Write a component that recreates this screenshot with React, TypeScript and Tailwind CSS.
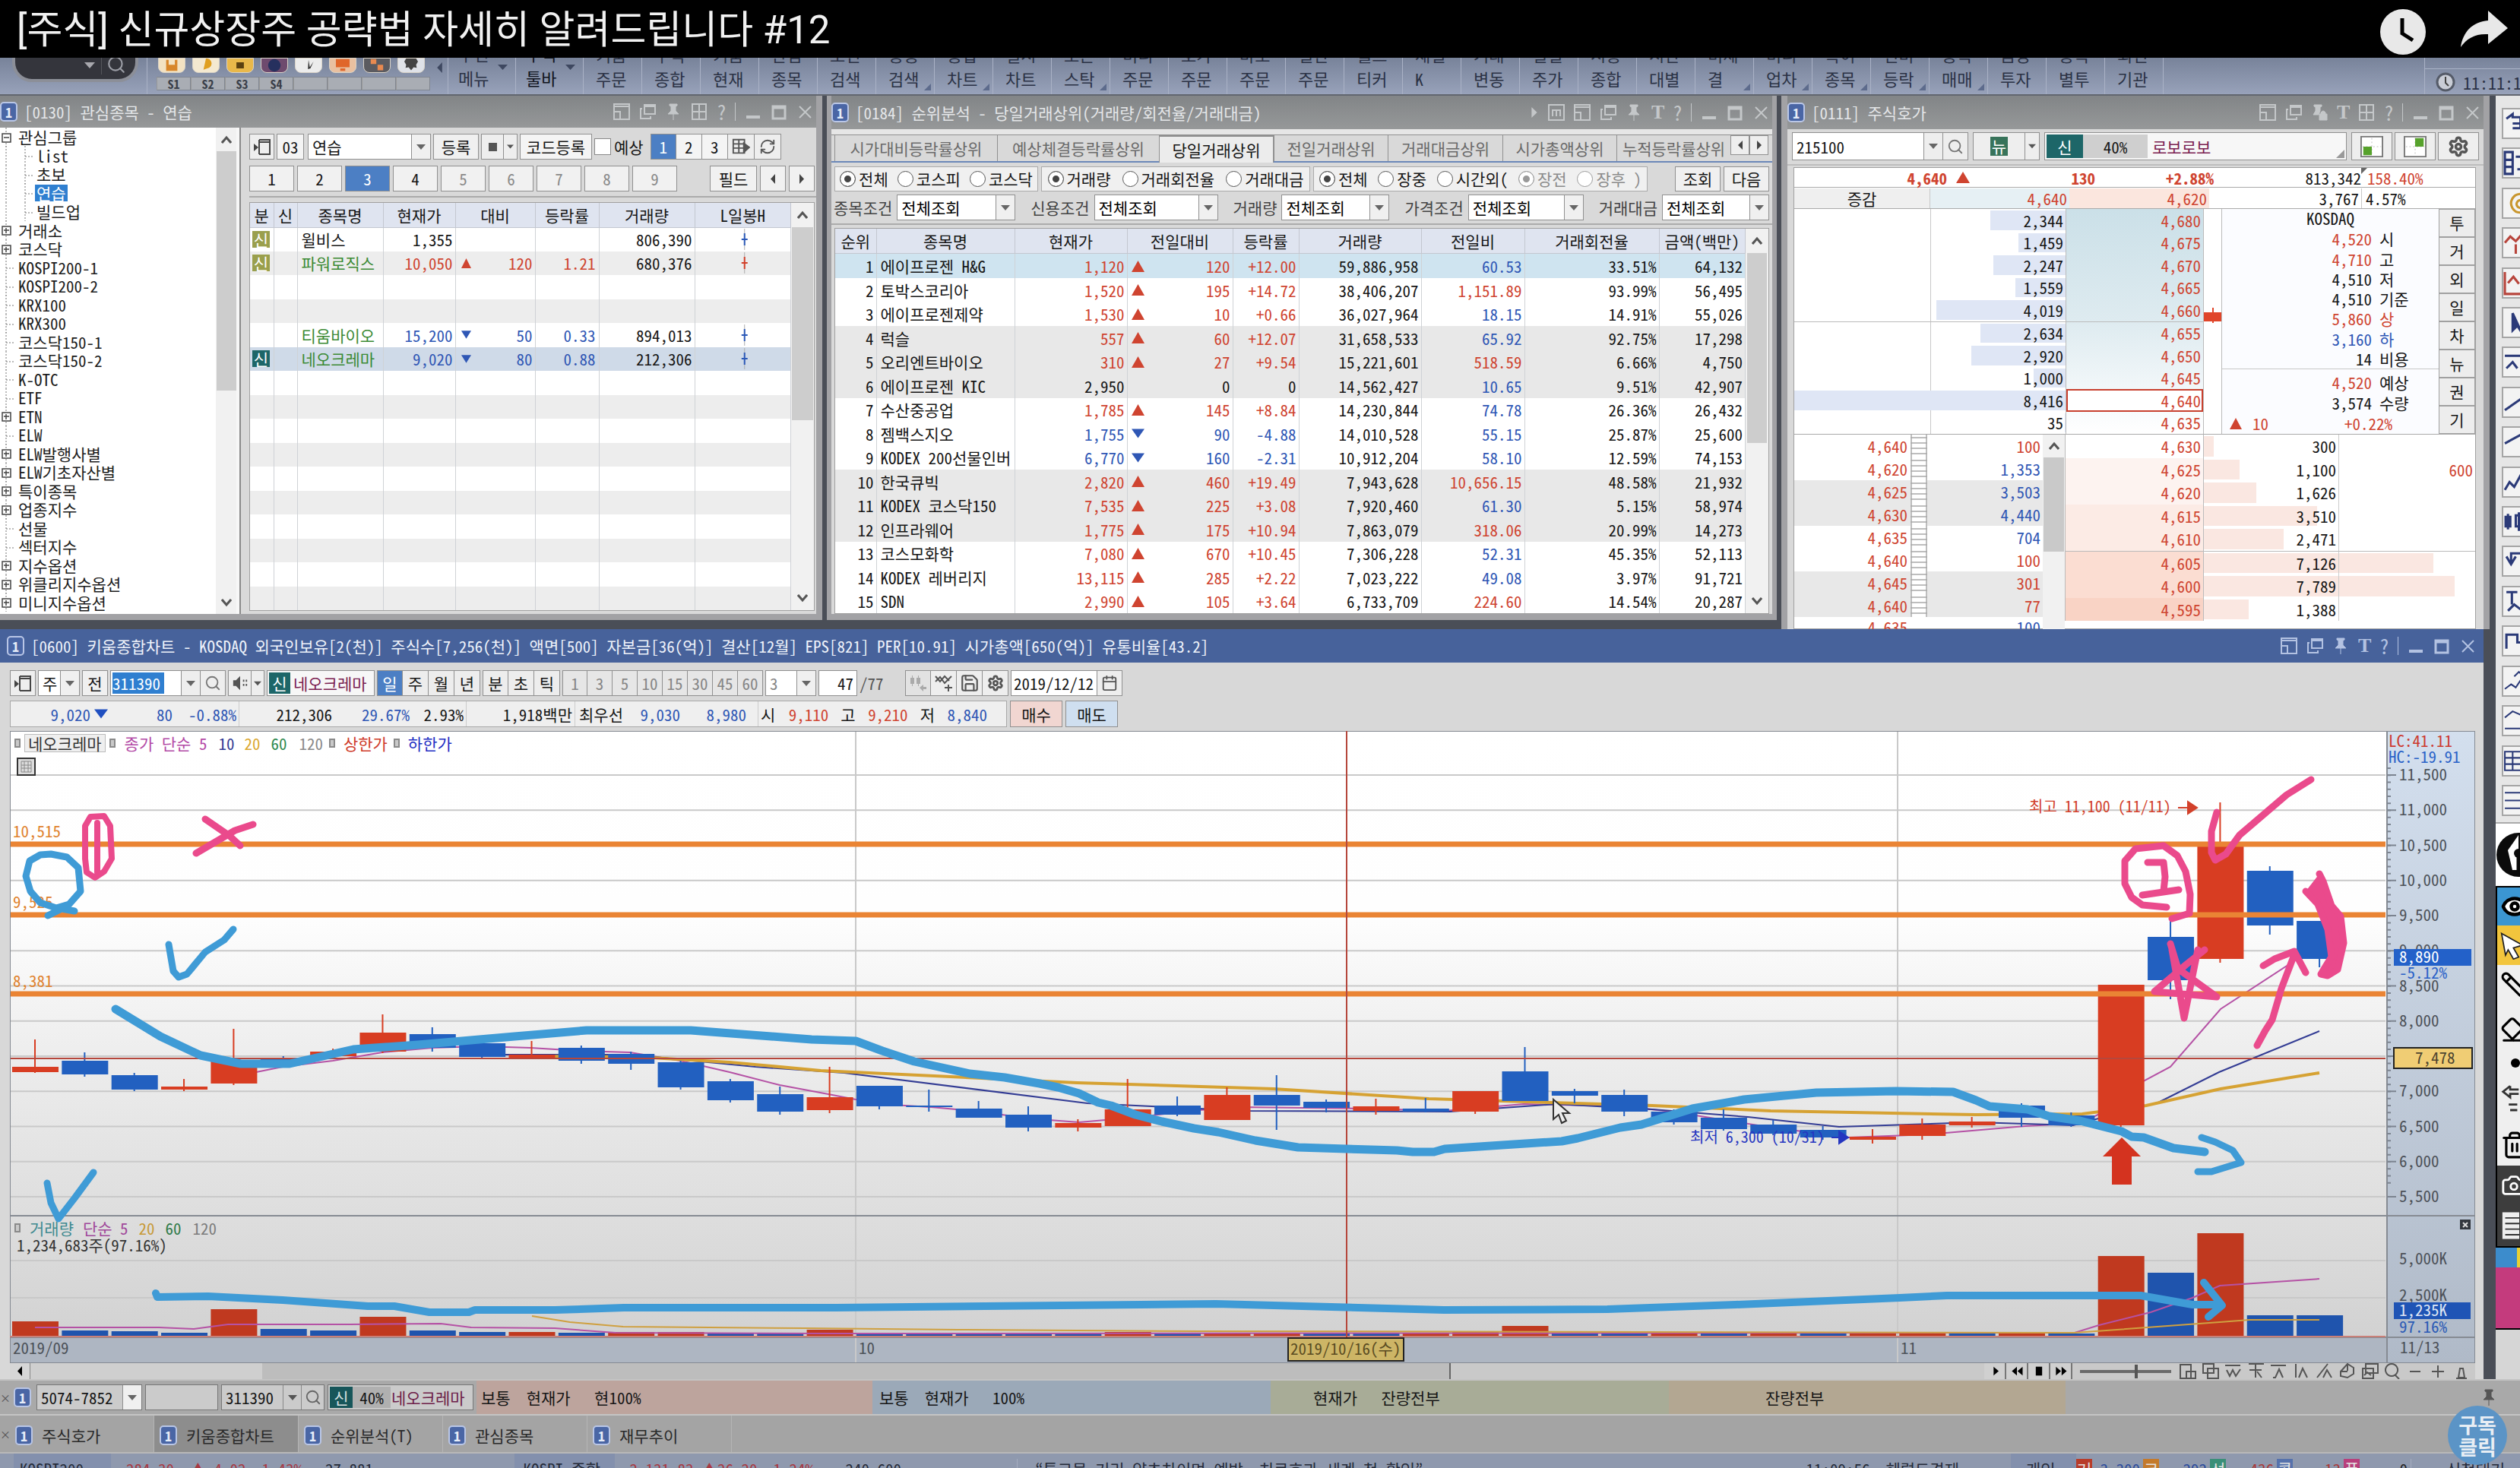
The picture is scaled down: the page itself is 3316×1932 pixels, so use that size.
import { ReactNode } from "react";
import { clsx } from "clsx";
import {
  Calendar,
  Camera,
  Eraser,
  Eye,
  Pencil,
  RefreshCw,
  Save,
  Search,
  Settings,
  Trash2,
} from "lucide-react";

type Tone = "up" | "down" | "none";

const toneText: Record<Tone, string> = {
  up: "text-[#cf4430]",
  down: "text-[#2f57b5]",
  none: "text-[#161616]",
};

/* ---------- small shared pieces ---------- */

const Arrow = ({ dir = "down", className }: { dir?: "down" | "up" | "left" | "right"; className?: string }) => {
  const points = {
    down: "0,1 10,1 5,9",
    up: "5,0 10,10 0,10",
    left: "8,0 8,10 2,5",
    right: "2,0 2,10 8,5",
  }[dir];
  return (
    <svg viewBox="0 0 10 10" className={clsx("shrink-0", className ?? "size-[12px] text-[#666]")} fill="currentColor" preserveAspectRatio="none">
      <polygon points={points} />
    </svg>
  );
};

const Chevron = ({ up }: { up?: boolean }) => (
  <svg viewBox="0 0 14 12" className="h-[14px] w-[14px] text-[#555]" fill="none" stroke="currentColor" strokeWidth="3">
    <path d={up ? "M1 10 L7 3 L13 10" : "M1 2 L7 9 L13 2"} />
  </svg>
);

const Badge = ({ className }: { className?: string }) => (
  <span
    className={clsx(
      "flex h-[26px] w-[23px] shrink-0 items-center justify-center rounded-[5px] border-2 border-[#b9c6e6] bg-[#4a66a5] text-[18px] font-bold leading-none text-[#e6ecf8]",
      className
    )}
  >
    1
  </span>
);

const Cell = ({ className, children, label }: { className?: string; children?: ReactNode; label?: string }) => (
  <button
    aria-label={label}
    className={clsx(
      "flex h-full shrink-0 items-center justify-center overflow-hidden whitespace-nowrap border border-[#909090]",
      className
    )}
  >
    {children}
  </button>
);

const Combo = ({ className, value, label, arrow = "w-[25px]" }: { className?: string; value: string; label: string; arrow?: string }) => (
  <span className={clsx("flex h-full shrink-0 border border-[#909090] bg-white", className)}>
    <select aria-label={label} className="min-w-0 flex-1 appearance-none bg-transparent pl-[5px] outline-none">
      <option>{value}</option>
    </select>
    <span className={clsx("flex shrink-0 items-center justify-center border-l border-[#909090] bg-[#f0f0f0]", arrow)}>
      <Arrow className="h-[9px] w-[12px] text-[#666]" />
    </span>
  </span>
);

const TitleIcon = ({ name }: { name: string }) => {
  if (name === "T") return <span className="w-[16px] text-center font-['Liberation_Serif',serif] text-[26px] font-bold leading-none">T</span>;
  if (name === "?") return <span className="w-[12px] text-center text-[26px] leading-none">?</span>;
  if (name === "|") return <span className="h-[24px] w-px bg-current" />;
  if (name === ">") return <Arrow dir="right" className="h-[14px] w-[12px]" />;
  return (
    <svg viewBox="0 0 22 22" className="size-[22px] shrink-0" fill="none" stroke="currentColor" strokeWidth="2">
      {name === "m" && <path d="M1 1h20v20H1z M6 16V8h10v8 M11 8v8" />}
      {name === "dock" && <path d="M1 1h20v20H1z M1 4h20 M1 11h8v10" />}
      {name === "copy" && <path d="M7 2h14v12H7z M4 7H2v13h13v-3 M7 4h14" />}
      {name === "pin" && <path d="M6 1h10v2l-2 1v6l4 4H4l4-4V4L6 3z M11 14v8" fill="currentColor" strokeWidth="1" />}
      {name === "lock" && <path d="M4 1h10v2l-2 1v5l-2 5H3l3-5V4L4 3z M11 13h10v8H11z M13 13v-2q3-4 6 0v2" fill="currentColor" strokeWidth="1" />}
      {name === "grid" && <path d="M2 1h18v20H2z M11 1v20 M2 11h18" />}
      {name === "min" && <path d="M2 18h18" strokeWidth="4" />}
      {name === "max" && <path d="M3 4h16v16H3z M3 6h16" strokeWidth="3" />}
      {name === "close" && <path d="M4 4l15 15 M19 4L4 19" />}
    </svg>
  );
};

const TitleBar = ({ title, icons, className, tone }: { title: string; icons: string[]; className?: string; tone?: string }) => (
  <header className={clsx("flex shrink-0 items-center", className)}>
    <Badge />
    <h2 className="ml-[9px] whitespace-pre">{title}</h2>
    <div className={clsx("ml-auto flex items-center gap-3", tone)}>
      {icons.map((name) => (
        <TitleIcon key={name} name={name} />
      ))}
    </div>
  </header>
);

/* ---------- top of the screen ---------- */

const VideoBar = () => (
  <header className="z-10 flex h-[76px] shrink-0 items-center bg-black pl-[22px] pr-[14px] text-[#f1f1f1]">
    <h1 className="mt-[3px] font-[Roboto,'Noto_Sans_CJK_KR',sans-serif] text-[51px] leading-none">
      [주식] 신규상장주 공략법 자세히 알려드립니다 #12
    </h1>
    <button aria-label="나중에 볼 동영상" className="ml-auto mt-[8px]">
      <svg viewBox="0 0 62 62" className="size-[62px]">
        <circle cx="31" cy="31" r="30" fill="#e8e8e8" />
        <path d="M30 13v20l14 9" fill="none" stroke="#000" strokeWidth="5" />
      </svg>
    </button>
    <button aria-label="공유" className="ml-[43px]">
      <svg viewBox="0 0 66 52" className="h-[52px] w-[66px]" fill="#e8e8e8">
        <path d="M38 2 L64 25 L38 46 V33 C22 32 10 38 2 50 C5 30 17 17 38 15 Z" />
      </svg>
    </button>
  </header>
);

const menuItems: [string, string, boolean?][] = [
  ["키움", "주문"], ["주식", "종합"], ["키움", "현재"], ["관심", "종목"], ["조건", "검색"],
  ["종종", "검색", true], ["종합", "차트", true], ["실시", "차트"], ["오픈", "스탁", true],
  ["미니", "주문"], ["호가", "주문"], ["바로", "주문"], ["일반", "주문"], ["월드", "티커"],
  ["채널", "K"], ["거래", "변동"], ["일별", "주가"], ["시총", "종합"], ["시간", "대별"],
  ["미체", "결", true], ["미니", "업차", true], ["특이", "종목", true], ["전비", "등락", true],
  ["종목", "매매", true], ["금융", "투자"], ["종목", "별투"], ["외인", "기관"],
];

const quickIcons = [
  { bg: "bg-[#f3e2c2]", fg: "#d8862a", d: "M8 2h18v18H8z M12 2v8h10V2" },
  { bg: "bg-[#f4e9d0]", fg: "#e0a020", d: "M17 0a8 8 0 0 1 2 16l-6 2z" },
  { bg: "bg-[#e9b84a]", fg: "#5b4010", d: "M11 6h12v10H11z M17 16v4" },
  { bg: "bg-[#6e4a6e]", fg: "#26305e", d: "M17 1a10 10 0 1 0 .1 0z" },
  { bg: "bg-[#ececec]", fg: "#333", d: "M17 2l2 12 6-9-5 11-4 1z" },
  { bg: "bg-[#e9c0a0]", fg: "#e0662a", d: "M6 1h22v13H6z M13 16h8v4h-8z" },
  { bg: "bg-[#5b5b60]", fg: "#e98a50", d: "M18 10h9v9h-9z M7 1h9v8H7z" },
  { bg: "bg-[#dfe2e8]", fg: "#444", d: "M9 0h16l3 5-3 5 1 5-5-1-4 5-4-5-5 1 1-5-3-5z" },
];

const MainToolbar = () => (
  <nav className="flex h-[50px] shrink-0 items-end overflow-hidden border-b-2 border-[#62666f] bg-linear-to-b from-[#78839a] to-[#98a2ba] text-[22px] leading-[32px] text-[#2b3245]">
    <div className="ml-[16px] flex h-[80px] shrink-0 items-end pb-[16px]">
      <div className="flex h-[60px] w-[166px] items-end justify-end rounded-[26px] border-4 border-[#8c8f98] bg-[#34353c] pb-[6px] text-[#9a9ca4]">
        <Arrow className="mb-[7px] mr-[8px] h-[10px] w-[14px] text-[#a8a8ae]" />
        <span className="mr-[6px] h-[40px] w-px bg-[#55565c]" />
        <Search className="mr-[12px] size-[26px]" />
      </div>
    </div>
    <div className="ml-[11px] flex h-full w-[396px] shrink-0 flex-col justify-between border-l border-[#aab2c6] pb-[5px] pl-[12px]">
      <div className="flex gap-[9px] pl-[2px]">
        {quickIcons.map((icon, i) => (
          <button key={i} aria-label={`빠른 도구 ${i + 1}`} className={clsx("h-[20px] w-[36px] rounded-b-[8px] border border-[#d9d3c8]", icon.bg)}>
            <svg viewBox="0 0 34 22" className="h-[18px] w-[34px]" fill={icon.fg}>
              <path d={icon.d} />
            </svg>
          </button>
        ))}
        <Arrow dir="left" className="mt-[6px] ml-[5px] h-[14px] w-[11px] text-[#3e4860]" />
      </div>
      <div className="flex text-[16px] font-bold leading-[16px] text-[#3a3f49]">
        {["S1", "S2", "S3", "S4", "", "", "", ""].map((s, i) => (
          <span key={i} className="h-[18px] w-[45px] border border-l-[#989898] border-[#808690] bg-[#a9adb4] text-center">
            {s}
          </span>
        ))}
      </div>
    </div>
    {[["추천", "메뉴"], ["주식", "툴바"]].map(([top, bottom], i) => (
      <div key={bottom} className={clsx("flex h-[70px] w-[89px] shrink-0 border-l border-[#aab2c6] pl-[13px]", i === 1 && "text-[#0f131d]")}>
        <p className="w-[44px]">
          {top}
          <br />
          {bottom}
        </p>
        <Arrow className="mt-[30px] ml-[8px] h-[9px] w-[13px] text-[#3e4860]" />
      </div>
    ))}
    {menuItems.map(([top, bottom, more], i) => (
      <button key={i} className="relative h-[74px] w-[77px] shrink-0 border-l border-[#aab2c6] pl-[16px] text-left">
        {top}
        <br />
        {bottom}
        {more && (
          <svg viewBox="0 0 10 10" className="absolute right-[4px] bottom-[5px] size-[9px]" fill="#5d6b8c">
            <path d="M10 0v10H0z" />
          </svg>
        )}
      </button>
    ))}
    <div className="h-[66px] flex-1 border-l border-[#aab2c6]" />
    <div className="flex h-[66px] w-[126px] shrink-0 items-end border-l border-[#aab2c6]">
      <div className="flex h-[34px] w-full items-center gap-[10px] border-t border-[#aab2c6] pl-[14px]">
        <svg viewBox="0 0 26 26" className="size-[26px] shrink-0">
          <circle cx="13" cy="13" r="11" fill="#c9cdd6" stroke="#555b68" strokeWidth="3" />
          <path d="M13 6v8l4 4" fill="none" stroke="#444" strokeWidth="2" />
        </svg>
        <time className="whitespace-nowrap">11:11:15</time>
      </div>
    </div>
  </nav>
);

/* ---------- [0130] watch list ---------- */

const treeRows: { name: string; kind: "open" | "plus" | "leaf" | "child" }[] = [
  { name: "관심그룹", kind: "open" },
  { name: "list", kind: "child" },
  { name: "초보", kind: "child" },
  { name: "연습", kind: "child" },
  { name: "빌드업", kind: "child" },
  { name: "거래소", kind: "plus" },
  { name: "코스닥", kind: "plus" },
  { name: "KOSPI200-1", kind: "leaf" },
  { name: "KOSPI200-2", kind: "leaf" },
  { name: "KRX100", kind: "leaf" },
  { name: "KRX300", kind: "leaf" },
  { name: "코스닥150-1", kind: "leaf" },
  { name: "코스닥150-2", kind: "leaf" },
  { name: "K-OTC", kind: "leaf" },
  { name: "ETF", kind: "leaf" },
  { name: "ETN", kind: "plus" },
  { name: "ELW", kind: "leaf" },
  { name: "ELW발행사별", kind: "plus" },
  { name: "ELW기초자산별", kind: "plus" },
  { name: "특이종목", kind: "plus" },
  { name: "업종지수", kind: "plus" },
  { name: "선물", kind: "leaf" },
  { name: "섹터지수", kind: "leaf" },
  { name: "지수옵션", kind: "plus" },
  { name: "위클리지수옵션", kind: "plus" },
  { name: "미니지수옵션", kind: "plus" },
];

const watchRows: (null | { tag?: string; name: string; price: string; diff?: string; rate?: string; vol: string; tone: Tone; green?: boolean })[] = [
  { tag: "bg-[#9a9f4c]", name: "윌비스", price: "1,355", vol: "806,390", tone: "none" },
  { tag: "bg-[#9a9f4c]", name: "파워로직스", price: "10,050", diff: "120", rate: "1.21", vol: "680,376", tone: "up", green: true },
  null,
  null,
  { name: "티움바이오", price: "15,200", diff: "50", rate: "0.33", vol: "894,013", tone: "down", green: true },
  { tag: "bg-[#1d6668]", name: "네오크레마", price: "9,020", diff: "80", rate: "0.88", vol: "212,306", tone: "down", green: true },
  ...Array(10).fill(null),
];

const WatchWindow = () => (
  <section className="flex h-[690px] flex-col border-r-8 border-b-8 border-[#a2a2a5] bg-[#d9d9d9]">
    <TitleBar
      className="h-[42px] bg-linear-to-b from-[#828587] to-[#969899] pr-[4px] text-[#e4e6e8]"
      tone="text-[#c4c7c9]"
      title="[0130] 관심종목 - 연습"
      icons={["dock", "copy", "pin", "grid", "?", "|", "min", "max", "close"]}
    />
    <div className="flex min-h-0 flex-1">
      <div className="flex w-[317px] shrink-0 overflow-hidden border-r-2 border-[#8a8a8a] bg-white text-[#1c1c1c]">
        <ul className="flex h-[637px] flex-1 flex-col">
          {treeRows.map(({ name, kind }) => (
            <li key={name} className="flex min-h-0 flex-1 items-center whitespace-nowrap leading-[22px]">
              <svg viewBox="0 0 24 25" className="h-[25px] w-[24px] shrink-0" stroke="#777" fill="none">
                <path d="M8 0v25" strokeDasharray="2 2" />
                {(kind === "plus" || kind === "open") && <path d="M3 8h11v11H3z M5 13h7" fill="#fff" stroke="#444" strokeWidth="1.5" />}
                {kind === "plus" && <path d="M8 10v7" stroke="#444" strokeWidth="1.5" />}
                {kind === "leaf" && <path d="M8 14h12" strokeDasharray="2 2" />}
              </svg>
              {kind === "child" && (
                <svg viewBox="0 0 22 25" className="h-[25px] w-[22px] shrink-0" stroke="#777" fill="none">
                  <path d="M9 0v25 M9 14h12" strokeDasharray="2 2" />
                </svg>
              )}
              <span className={clsx(kind === "child" && "px-[2px]", name === "연습" && "bg-[#2f7fd0] text-white")}>{name}</span>
            </li>
          ))}
        </ul>
        <div className="flex w-[27px] shrink-0 flex-col items-center bg-[#f1f1f1]">
          <span className="flex h-[31px] items-center"><Chevron up /></span>
          <span className="h-[315px] w-[26px] bg-[#cdcdcd]" />
          <span className="mt-auto flex h-[30px] items-center"><Chevron /></span>
        </div>
        <span className="w-[4px] bg-[#f7f7f7]" />
      </div>
      <div className="flex min-w-0 flex-1 flex-col pl-[11px]">
        <div className="mt-[8px] flex h-[34px] items-center gap-[3px]">
          <Cell label="패널 접기" className="w-[33px] bg-[#eee]">
            <svg viewBox="0 0 24 24" className="size-[24px]" fill="none" stroke="#444" strokeWidth="2">
              <path d="M8 3h14v19H8 M8 3v19 M8 6h14" />
              <path d="M1 8l6 5-6 5z" fill="#444" stroke="none" />
            </svg>
          </Cell>
          <span className="flex h-full w-[36px] items-center justify-center border border-[#909090] bg-[#f4f4f4]">03</span>
          <Combo label="관심그룹" value="연습" className="ml-[2px] w-[162px]" />
          <Cell className="w-[60px] bg-[#f0f0f0]">등록</Cell>
          <span className="flex h-full">
            <Cell label="색" className="w-[30px] bg-[#eee]"><span className="size-[11px] bg-[#555]" /></Cell>
            <Cell label="색 선택" className="w-[18px] border-l-0 bg-[#eee]"><Arrow className="h-[6px] w-[9px] text-[#555]" /></Cell>
          </span>
          <Cell className="w-[95px] bg-[#f4f4f4]">코드등록</Cell>
          <label className="flex items-center gap-[4px]">
            <input type="checkbox" className="size-[22px] appearance-none border border-[#888] bg-white" />
            예상
          </label>
          <span className="ml-[6px] flex h-full">
            {["1", "2", "3"].map((n) => (
              <Cell key={n} className={clsx("w-[34px]", n === "1" ? "bg-[#4c7fc4] text-white" : "border-l-0 bg-[#f4f4f4]")}>{n}</Cell>
            ))}
            <Cell label="표" className="w-[35px] border-l-0 bg-[#eee]">
              <svg viewBox="0 0 26 26" className="size-[24px]" fill="none" stroke="#555" strokeWidth="2">
                <path d="M2 3h16v19H2z M2 9h16 M2 15h16 M10 3v19" />
                <path d="M17 8l8 6-8 7z" fill="#555" />
              </svg>
            </Cell>
            <Cell label="새로고침" className="w-[35px] border-l-0 bg-[#eee]"><RefreshCw className="size-[22px] text-[#555]" /></Cell>
          </span>
        </div>
        <div className="mt-[8px] flex h-[34px] gap-[4px]">
          {[1, 2, 3, 4, 5, 6, 7, 8, 9].map((n) => (
            <Cell key={n} className={clsx("w-[59px]", n === 3 ? "bg-[#4c7fc4] text-white" : "bg-[#f1f1f1]", n > 4 && "text-[#8a8a8a]")}>{n}</Cell>
          ))}
          <Cell className="ml-auto w-[62px] bg-[#f1f1f1]">필드</Cell>
          <Cell label="이전" className="w-[34px] bg-[#f1f1f1]"><Arrow dir="left" className="h-[13px] w-[10px] text-[#444]" /></Cell>
          <Cell label="다음" className="mr-[2px] w-[34px] bg-[#f1f1f1]"><Arrow dir="right" className="h-[13px] w-[10px] text-[#444]" /></Cell>
        </div>
        <div className="mt-[6px] mb-[6px] h-[2px] bg-[#ababab]" />
        <div className="mr-[2px] flex h-[538px] border border-[#a0a0a0] bg-white">
          <table className="h-[536px] flex-1 table-fixed border-collapse">
            <colgroup>
              <col className="w-[31px]" /><col className="w-[31px]" /><col className="w-[113px]" /><col className="w-[95px]" />
              <col className="w-[105px]" /><col className="w-[84px]" /><col className="w-[126px]" /><col />
            </colgroup>
            <thead>
              <tr className="h-[32px] bg-[#dfe4f0]">
                {["분", "신", "종목명", "현재가", "대비", "등락률", "거래량", "L일봉H"].map((h) => (
                  <th key={h} className="border-r border-b border-[#c3c7d0] font-normal">{h}</th>
                ))}
              </tr>
            </thead>
            <tbody>
              {watchRows.map((row, i) => (
                <tr
                  key={i}
                  className={clsx(
                    "h-[31px] leading-[22px] *:border-r *:border-[#cfd2d6] *:p-0 *:whitespace-nowrap",
                    i === 5 ? "bg-[#cfdae8]" : i % 2 ? "bg-[#ededed]" : "bg-white"
                  )}
                >
                  <td>{row?.tag && <span className={clsx("ml-[3px] block w-[23px] text-center text-white", row.tag)}>신</span>}</td>
                  <td />
                  <td className={clsx(row?.green && "text-[#3c8a35]")}><span className="pl-[5px]">{row?.name}</span></td>
                  <td className={clsx("text-right", row && toneText[row.tone])}><span className="pr-[3px]">{row?.price}</span></td>
                  <td className={clsx(row && toneText[row.tone])}>
                    {row?.diff && (
                      <span className="flex items-center justify-between pl-[7px] pr-[3px]">
                        <Arrow dir={row.tone === "up" ? "up" : "down"} className="h-[13px] w-[13px]" />
                        {row.diff}
                      </span>
                    )}
                  </td>
                  <td className={clsx("text-right", row && toneText[row.tone])}><span className="pr-[4px]">{row?.rate}</span></td>
                  <td className="text-right"><span className="pr-[3px]">{row?.vol}</span></td>
                  <td>
                    {row && (
                      <svg viewBox="0 0 126 28" className="block h-[28px] w-full" strokeWidth="2" stroke={row.tone === "up" ? "#d2402a" : "#2b59b8"}>
                        <path d="M65 0v28" stroke="#aaa" strokeWidth="1" />
                        <path d="M65 6v16 M61 14h8" />
                      </svg>
                    )}
                  </td>
                </tr>
              ))}
            </tbody>
          </table>
          <div className="flex w-[30px] shrink-0 flex-col items-center bg-[#f1f1f1]">
            <span className="flex h-[32px] items-center"><Chevron up /></span>
            <span className="h-[254px] w-[28px] bg-[#cdcdcd]" />
            <span className="mt-auto flex h-[32px] items-center"><Chevron /></span>
          </div>
        </div>
      </div>
    </div>
  </section>
);

/* ---------- [0184] ranking ---------- */

type Rank = [string, string, Tone, string, string, string, string, Tone, string, string];

const rankRows: Rank[] = [
  ["에이프로젠 H&G", "1,120", "up", "120", "+12.00", "59,886,958", "60.53", "down", "33.51%", "64,132"],
  ["토박스코리아", "1,520", "up", "195", "+14.72", "38,406,207", "1,151.89", "up", "93.99%", "56,495"],
  ["에이프로젠제약", "1,530", "up", "10", "+0.66", "36,027,964", "18.15", "down", "14.91%", "55,026"],
  ["럭슬", "557", "up", "60", "+12.07", "31,658,533", "65.92", "down", "92.75%", "17,298"],
  ["오리엔트바이오", "310", "up", "27", "+9.54", "15,221,601", "518.59", "up", "6.66%", "4,750"],
  ["에이프로젠 KIC", "2,950", "none", "0", "0", "14,562,427", "10.65", "down", "9.51%", "42,907"],
  ["수산중공업", "1,785", "up", "145", "+8.84", "14,230,844", "74.78", "down", "26.36%", "26,432"],
  ["젬백스지오", "1,755", "down", "90", "-4.88", "14,010,528", "55.15", "down", "25.87%", "25,600"],
  ["KODEX 200선물인버", "6,770", "down", "160", "-2.31", "10,912,204", "58.10", "down", "12.59%", "74,153"],
  ["한국큐빅", "2,820", "up", "460", "+19.49", "7,943,628", "10,656.15", "up", "48.58%", "21,932"],
  ["KODEX 코스닥150", "7,535", "up", "225", "+3.08", "7,920,460", "61.30", "down", "5.15%", "58,974"],
  ["인프라웨어", "1,775", "up", "175", "+10.94", "7,863,079", "318.06", "up", "20.99%", "14,273"],
  ["코스모화학", "7,080", "up", "670", "+10.45", "7,306,228", "52.31", "down", "45.35%", "52,113"],
  ["KODEX 레버리지", "13,115", "up", "285", "+2.22", "7,023,222", "49.08", "down", "3.97%", "91,721"],
  ["SDN", "2,990", "up", "105", "+3.64", "6,733,709", "224.60", "up", "14.54%", "20,287"],
];

const Radio = ({ name, label, checked, muted }: { name: string; label: string; checked?: boolean; muted?: boolean }) => (
  <label className={clsx("flex items-center gap-[4px] whitespace-nowrap", muted && "text-[#8b8b8b]")}>
    <input
      type="radio"
      name={name}
      defaultChecked={checked}
      className={clsx(
        "size-[21px] appearance-none rounded-full border bg-white checked:shadow-[inset_0_0_0_5px_#fff]",
        muted ? "border-[#9a9a9a] checked:bg-[#999]" : "border-[#555] checked:bg-[#444]"
      )}
    />
    {label}
  </label>
);

const rankTabs: [string, string][] = [
  ["시가대비등락률상위", "w-[214px]"],
  ["예상체결등락률상위", "w-[213px]"],
  ["당일거래상위", "w-[151px]"],
  ["전일거래상위", "w-[150px]"],
  ["거래대금상위", "w-[151px]"],
  ["시가총액상위", "w-[150px]"],
  ["누적등락률상위", "w-[150px]"],
];

const filters: [string, string][] = [
  ["종목조건", "w-[156px]"],
  ["신용조건", "w-[163px]"],
  ["거래량", "w-[142px]"],
  ["가격조건", "w-[152px]"],
  ["거래대금", "w-[141px]"],
];

const RankWindow = () => (
  <section className="flex h-[690px] flex-col border-x-6 border-b-8 border-[#a2a2a5] bg-[#d9d9d9]">
    <TitleBar
      className="h-[44px] bg-linear-to-b from-[#828587] to-[#969899] pr-[4px] text-[#e4e6e8]"
      tone="text-[#c4c7c9]"
      title="[0184] 순위분석 - 당일거래상위(거래량/회전율/거래대금)"
      icons={[">", "m", "dock", "copy", "pin", "T", "?", "|", "min", "max", "close"]}
    />
    <div className="h-[8px] border-b border-[#909090] bg-[#e6e6e6]" />
    <div className="flex h-[36px] border-b-2 border-[#6c88b8] pl-[4px]">
      {rankTabs.map(([name, width]) => (
        <button
          key={name}
          className={clsx(
            "shrink-0 overflow-hidden whitespace-nowrap border-l border-[#909090]",
            width,
            name === "당일거래상위" ? "-mb-[2px] border-x border-t-2 border-[#6c88b8] bg-[#ececec]" : "text-[#6a6a6a]"
          )}
        >
          {name}
        </button>
      ))}
      <span className="flex h-[26px]">
        <Cell label="이전 탭" className="w-[25px] bg-[#eee]"><Arrow dir="left" className="h-[12px] w-[10px] text-[#444]" /></Cell>
        <Cell label="다음 탭" className="w-[25px] bg-[#eee]"><Arrow dir="right" className="h-[12px] w-[10px] text-[#444]" /></Cell>
      </span>
    </div>
    <div className="mt-[5px] flex h-[34px] gap-[4px] pl-[4px] pr-[4px]">
      <fieldset className="flex w-[268px] items-center justify-around border border-[#aaa] bg-[#f0f0f0]">
        <Radio name="market" label="전체" checked />
        <Radio name="market" label="코스피" />
        <Radio name="market" label="코스닥" />
      </fieldset>
      <fieldset className="flex w-[354px] items-center justify-around border border-[#aaa] bg-[#f0f0f0]">
        <Radio name="sort" label="거래량" checked />
        <Radio name="sort" label="거래회전율" />
        <Radio name="sort" label="거래대금" />
      </fieldset>
      <fieldset className="flex w-[440px] items-center justify-around border border-[#aaa] bg-[#f0f0f0]">
        <Radio name="time" label="전체" checked />
        <Radio name="time" label="장중" />
        <Radio name="time" label="시간외(" />
        <Radio name="after" label="장전" checked muted />
        <Radio name="after" label="장후 )" muted />
      </fieldset>
      <Cell className="ml-auto w-[60px] bg-[#f0f0f0]">조회</Cell>
      <Cell className="w-[60px] bg-[#f0f0f0]">다음</Cell>
    </div>
    <div className="mt-[4px] flex h-[34px] items-center justify-between pl-[3px] pr-[4px] text-[#444]">
      {filters.map(([label, width]) => (
        <div key={label} className="flex h-full items-center gap-[6px]">
          <span>{label}</span>
          <Combo label={label} value="전체조회" className={clsx("text-black", width)} />
        </div>
      ))}
    </div>
    <div className="mt-[4px] mb-[4px] h-[2px] bg-[#ababab]" />
    <div className="mx-[4px] flex h-[508px] border border-[#a0a0a0] bg-white">
      <table className="h-[506px] flex-1 table-fixed border-collapse">
        <colgroup>
          <col className="w-[54px]" /><col className="w-[182px]" /><col className="w-[148px]" /><col className="w-[139px]" /><col className="w-[87px]" />
          <col className="w-[161px]" /><col className="w-[136px]" /><col className="w-[177px]" /><col />
        </colgroup>
        <thead>
          <tr className="h-[33px] bg-[#dfe4f0]">
            {["순위", "종목명", "현재가", "전일대비", "등락률", "거래량", "전일비", "거래회전율", "금액(백만)"].map((h) => (
              <th key={h} className="border-r border-b border-[#c3c7d0] font-normal whitespace-nowrap">{h}</th>
            ))}
          </tr>
        </thead>
        <tbody>
          {rankRows.map(([name, price, tone, diff, rate, vol, ratio, ratioTone, turn, amount], i) => (
            <tr
              key={name}
              className={clsx(
                "leading-[22px] *:overflow-hidden *:border-r *:border-[#cfd2d6] *:py-0 *:pr-[3px] *:pl-0 *:text-right *:whitespace-nowrap",
                i === 0 ? "bg-[#cfe4f0]" : Math.floor(i / 3) % 2 ? "bg-[#e8e8e8]" : "bg-white"
              )}
            >
              <td>{i + 1}</td>
              <td><span className="block pl-[5px] text-left">{name}</span></td>
              <td className={toneText[tone]}>{price}</td>
              <td className={toneText[tone]}>
                <span className="flex items-center pl-[5px]">
                  {tone !== "none" && <Arrow dir={tone === "up" ? "up" : "down"} className="h-[15px] w-[17px]" />}
                  <span className="ml-auto">{diff}</span>
                </span>
              </td>
              <td className={toneText[tone]}>{rate}</td>
              <td>{vol}</td>
              <td className={toneText[ratioTone]}>{ratio}</td>
              <td>{turn}</td>
              <td>{amount}</td>
            </tr>
          ))}
        </tbody>
      </table>
      <div className="flex w-[30px] shrink-0 flex-col items-center bg-[#f1f1f1]">
        <span className="flex h-[32px] items-center"><Chevron up /></span>
        <span className="h-[250px] w-[26px] bg-[#cdcdcd]" />
        <span className="mt-auto flex h-[32px] items-center"><Chevron /></span>
      </div>
    </div>
  </section>
);

/* ---------- [0111] order book ---------- */

const asks: [number, string][] = [
  [2344, "4,680"], [1459, "4,675"], [2247, "4,670"], [1559, "4,665"], [4019, "4,660"],
  [2634, "4,655"], [2920, "4,650"], [1000, "4,645"], [8416, "4,640"], [35, "4,635"],
];

const bids: [string, number, string?][] = [
  ["4,630", 300], ["4,625", 1100, "600"], ["4,620", 1626], ["4,615", 3510],
  ["4,610", 2471], ["4,605", 7126], ["4,600", 7789], ["4,595", 1388],
];

const trades: [string, string, Tone][] = [
  ["4,640", "100", "up"], ["4,620", "1,353", "down"], ["4,625", "3,503", "down"], ["4,630", "4,440", "down"],
  ["4,635", "704", "down"], ["4,640", "100", "up"], ["4,645", "301", "up"], ["4,640", "77", "up"],
];

const quoteInfo: [string, string, Tone, Tone][] = [
  ["4,520", "시", "up", "none"], ["4,710", "고", "up", "none"], ["4,510", "저", "none", "none"],
  ["4,510", "기준", "none", "none"], ["5,860", "상", "up", "up"], ["3,160", "하", "down", "down"], ["14", "비용", "none", "none"],
];

const InfoLine = ({ value, label, tone, labelTone }: { value: string; label: string; tone: Tone; labelTone: Tone }) => (
  <p className="flex flex-1 items-center leading-[22px]">
    <span className={clsx("w-[197px] text-right", toneText[tone])}>{value}</span>
    <span className={clsx("ml-[10px]", toneText[labelTone])}>{label}</span>
  </p>
);

const QuoteWindow = () => (
  <section className="flex h-[702px] flex-col overflow-hidden border-x-8 border-[#a2a2a5] bg-[#d9d9d9]">
    <TitleBar
      className="h-[44px] bg-linear-to-b from-[#828587] to-[#969899] pr-[4px] text-[#e4e6e8]"
      tone="text-[#c4c7c9]"
      title="[0111] 주식호가"
      icons={["dock", "copy", "lock", "T", "grid", "?", "|", "min", "max", "close"]}
    />
    <div className="mt-[4px] flex h-[37px] gap-[6px] px-[6px]">
      <span className="flex h-full w-[232px] border border-[#909090] bg-white">
        <input aria-label="종목코드" defaultValue="215100" className="w-[172px] bg-transparent pl-[5px] outline-none" />
        <span className="flex w-[25px] items-center justify-center border-l border-[#909090] bg-[#eee]"><Arrow className="h-[9px] w-[12px] text-[#666]" /></span>
        <span className="flex flex-1 items-center justify-center border-l border-[#909090] bg-[#eee]"><Search className="size-[22px] text-[#777]" /></span>
      </span>
      <span className="flex h-full">
        <Cell className="w-[69px] bg-[#eee]"><span className="bg-[#37735a] px-[2px] leading-[25px] text-white">뉴</span></Cell>
        <Cell label="뉴스 선택" className="w-[19px] border-l-0 bg-[#eee]"><Arrow className="h-[7px] w-[10px] text-[#555]" /></Cell>
      </span>
      <span className="flex h-full flex-1 items-center border border-[#909090] bg-[#f7f7f7] p-[2px]">
        <span className="flex h-full w-[48px] items-center justify-center bg-[#1d6668] text-white">신</span>
        <span className="flex h-full w-[85px] items-center justify-center bg-[#cfcfcf]">40%</span>
        <span className="ml-[6px] text-[#7a2050]">로보로보</span>
        <svg viewBox="0 0 10 10" className="mt-auto ml-auto size-[11px]" fill="#999"><path d="M10 0v10H0z" /></svg>
      </span>
      <span className="flex h-full gap-[3px]">
        {["M6 16h12v12H6z", "M18 4h12v12H18z"].map((d) => (
          <Cell key={d} label="배치" className="w-[54px] bg-[#eee]">
            <svg viewBox="0 0 36 32" className="h-[30px] w-[38px]">
              <path d="M3 2h30v28H3z" fill="#fff" stroke="#777" strokeWidth="2" />
              <path d="M18 4v24 M5 16h26" stroke="#bbb" strokeDasharray="2 3" />
              <path d={d} fill="#57a22c" />
            </svg>
          </Cell>
        ))}
        <Cell label="설정" className="w-[54px] bg-[#eee]"><Settings className="size-[28px] text-[#555]" strokeWidth={3} /></Cell>
      </span>
    </div>
    <div className="mt-[5px] mb-[2px] h-[2px] bg-[#bdbdbd]" />
    <div className="mr-[10px] ml-[8px] flex min-h-0 flex-1 flex-col border border-[#a0a0a0] bg-white">
      <div className="flex h-[26px] items-center border-b border-[#aaa] leading-[22px]">
        <strong className={clsx("w-[201px] text-right", toneText.up)}>4,640</strong>
        <Arrow dir="up" className="ml-[12px] h-[15px] w-[18px] text-[#cf4430]" />
        <strong className={clsx("w-[165px] text-right", toneText.up)}>130</strong>
        <strong className={clsx("w-[156px] text-right", toneText.up)}>+2.88%</strong>
        <span className="w-[194px] text-right">813,342</span>
        <svg viewBox="0 0 8 8" className="mb-auto size-[8px]" fill="#666"><path d="M0 0h8L0 8z" /></svg>
        <span className={toneText.up}>158.40%</span>
      </div>
      <div className="flex h-[28px] items-center border-b border-[#aaa] leading-[26px]">
        <span className="w-[179px] border-r border-[#c8c8c8] bg-[#efefef] text-center">증감</span>
        <span className={clsx("w-[183px] bg-[#e6f0f4] pr-[3px] text-right", toneText.up)}>4,640</span>
        <span className={clsx("w-[184px] bg-[#fbe6de] pr-[3px] text-right", toneText.up)}>4,620</span>
        <span className="w-[201px] border-r border-[#c8c8c8] pr-[3px] text-right">3,767</span>
        <span className="ml-[5px]">4.57%</span>
      </div>
      <div className="flex h-[297px] shrink-0 border-b border-[#aaa]">
        <div className="flex w-[357px] flex-col bg-[linear-gradient(to_right,transparent_179px,#c8c8c8_179px,#c8c8c8_180px,transparent_180px)]">
          {asks.map(([qty], i) => (
            <div key={i} className={clsx("relative flex min-h-0 flex-1 items-center justify-end pr-[3px]", i === 4 && "border-b border-[#bbb]")}>
              <span className="absolute inset-y-[2px] right-0 bg-[#dfe6f5]" style={{ width: `${(qty / 8416) * 100}%` }} />
              <span className="relative">{qty.toLocaleString("en-US")}</span>
            </div>
          ))}
        </div>
        <div className="flex w-[182px] flex-col border-x border-[#bbb] bg-linear-to-b from-[#cbe0e8] via-[#deebf0] to-white">
          {asks.map(([, price], i) => (
            <div
              key={price}
              className={clsx(
                "flex min-h-0 flex-1 items-center justify-end pr-[3px] text-[#cf4430]",
                i === 4 && "border-b border-[#bbb]",
                i === 8 && "bg-white outline-2 -outline-offset-2 outline-[#c8402e]"
              )}
            >
              {price}
            </div>
          ))}
        </div>
        <svg viewBox="0 0 23 296" className="h-full w-[23px] shrink-0">
          <path d="M0 136h23v12H0z M11 130h2v20h-2z" fill="#e0452a" />
        </svg>
        <div className="flex flex-1 flex-col border-l border-[#bbb] bg-[#fbfcff]">
          <p className="flex-1 text-center leading-[24px]">KOSDAQ</p>
          {quoteInfo.map(([value, label, tone, labelTone]) => (
            <InfoLine key={label} value={value} label={label} tone={tone} labelTone={labelTone} />
          ))}
          <div className="flex h-[86px] flex-col border-t border-[#c8c8c8] pt-[3px]">
            <InfoLine value="4,520" label="예상" tone="up" labelTone="none" />
            <InfoLine value="3,574" label="수량" tone="none" labelTone="none" />
            <p className={clsx("flex flex-1 items-center pl-[10px]", toneText.up)}>
              <Arrow dir="up" className="h-[15px] w-[16px]" />
              <span className="ml-[14px]">10</span>
              <span className="mr-[61px] ml-auto">+0.22%</span>
            </p>
          </div>
        </div>
        <div className="flex w-[48px] flex-col">
          {["투", "거", "외", "일", "차", "뉴", "권", "기"].map((t) => (
            <button key={t} className="flex-1 border border-[#a0a0a0] bg-[#ededed] leading-none">{t}</button>
          ))}
        </div>
      </div>
      <div className="flex min-h-0 flex-1">
        <div className="flex h-[276px] w-[356px] shrink-0">
          <div className="flex h-[245px] flex-1 flex-col">
            {trades.map(([price, qty, tone], i) => (
              <div key={i} className={clsx("flex flex-1 items-center", i % 4 > 1 && "bg-[#e8e8e8]")}>
                <span className="w-[149px] text-right text-[#cf4430]">{price}</span>
                <svg viewBox="0 0 22 30" preserveAspectRatio="none" className="ml-[4px] h-full w-[22px]">
                  <path d="M0 0h22v30H0z" fill="#fff" />
                  <path d="M0 4h22 M0 11h22 M0 18h22 M0 25h22 M1 0v30 M21 0v30" stroke="#a9a9a9" strokeWidth="1.5" />
                </svg>
                <span className={clsx("ml-auto pr-[3px]", toneText[tone])}>{qty}</span>
              </div>
            ))}
            <div className="flex">
              <span className="w-[149px] text-right text-[#cf4430]">4,635</span>
              <span className="ml-auto pr-[3px] text-[#2f57b5]">100</span>
            </div>
          </div>
          <div className="flex w-[29px] flex-col items-center bg-[#f1f1f1]">
            <span className="flex h-[30px] items-center"><Chevron up /></span>
            <span className="h-[124px] w-[27px] bg-[#c9c9c9]" />
          </div>
        </div>
        <div className="flex h-[245px] flex-1 flex-col border-l border-[#bbb]">
          {bids.map(([price, qty, extra], i) => (
            <div key={price} className={clsx("flex flex-1", i === 4 && "border-b border-[#bbb]")}>
              <span
                className={clsx(
                  "flex w-[182px] items-center justify-end border-r border-[#bbb] pr-[3px] text-[#cf4430]",
                  i === 0 && "bg-white",
                  (i === 1 || i === 2) && "bg-[#fdf3f0]",
                  (i === 3 || i === 4) && "bg-[#fcebe5]",
                  (i === 5 || i === 6) && "bg-[#fbddd2]",
                  i === 7 && "bg-[#f9d3c5]"
                )}
              >
                {price}
              </span>
              <span className="relative flex flex-1 items-center">
                <span className="absolute inset-y-[2px] left-0 bg-[#fae7e1]" style={{ width: `${(qty / 8416) * 100}%` }} />
                <span className="relative flex h-full w-[178px] items-center justify-end border-r border-[#ccc] pr-[3px]">{qty.toLocaleString("en-US")}</span>
                <span className="relative ml-auto pr-[3px] text-[#cf4430]">{extra}</span>
              </span>
            </div>
          ))}
        </div>
      </div>
    </div>
  </section>
);

/* ---------- [0600] chart ---------- */

// open/close box, wick top and bottom, all in chart units
const candles: [boolean, number, number, number, number][] = [
  [true, 1404, 1411, 1368, 1412], [false, 1396, 1414, 1385, 1417], [false, 1415, 1434, 1412, 1436], [true, 1430, 1434, 1420, 1436],
  [true, 1396, 1426, 1354, 1428], [false, 1392, 1397, 1390, 1400], [true, 1384, 1390, 1380, 1392], [true, 1359, 1384, 1335, 1386],
  [false, 1361, 1379, 1352, 1384], [false, 1373, 1391, 1370, 1394], [true, 1388, 1392, 1370, 1394], [false, 1379, 1396, 1376, 1400],
  [false, 1387, 1400, 1384, 1408], [false, 1398, 1431, 1396, 1434], [false, 1423, 1448, 1420, 1451], [false, 1440, 1463, 1430, 1467],
  [true, 1444, 1461, 1404, 1465], [false, 1429, 1456, 1429, 1460], [false, 1455, 1457, 1434, 1463], [false, 1459, 1471, 1449, 1471],
  [false, 1467, 1484, 1456, 1489], [true, 1478, 1484, 1473, 1489], [true, 1460, 1482, 1420, 1482], [false, 1455, 1467, 1443, 1469],
  [true, 1441, 1474, 1431, 1474], [false, 1441, 1455, 1415, 1487], [false, 1450, 1458, 1447, 1464], [true, 1456, 1462, 1446, 1467],
  [false, 1459, 1463, 1445, 1464], [true, 1436, 1463, 1436, 1466], [false, 1410, 1449, 1378, 1449], [false, 1436, 1442, 1433, 1452],
  [false, 1441, 1463, 1434, 1469], [false, 1463, 1477, 1460, 1480], [false, 1471, 1486, 1460, 1488], [false, 1480, 1492, 1474, 1494],
  [false, 1487, 1497, 1482, 1500], [true, 1496, 1500, 1486, 1505], [true, 1480, 1495, 1472, 1500], [true, 1476, 1481, 1470, 1484],
  [false, 1455, 1471, 1452, 1483], [false, 1468, 1481, 1464, 1483], [true, 1296, 1481, 1296, 1483], [false, 1233, 1290, 1210, 1315],
  [true, 1110, 1262, 1056, 1267], [false, 1146, 1218, 1140, 1230], [false, 1212, 1262, 1212, 1273],
];

const volumes: [boolean, number][] = [
  [true, 19], [false, 7], [false, 6], [false, 4], [true, 35], [false, 9], [false, 7], [true, 25], [false, 7], [false, 5],
  [true, 5], [false, 4], [true, 5], [true, 5], [false, 3], [false, 3], [true, 8], [false, 4], [false, 4], [false, 4],
  [false, 3], [false, 3], [true, 5], [false, 4], [true, 4], [true, 3], [false, 3], [false, 3], [true, 3], [true, 6],
  [true, 13], [false, 4], [false, 3], [true, 3], [false, 4], [true, 3], [false, 3], [true, 3], [true, 3], [false, 3],
  [true, 3], [false, 3], [true, 105], [false, 83], [true, 135], [false, 27], [false, 27],
];

const candleX = (i: number) => 46 + i * 65.35;

const priceLabels = ["11,500", "11,000", "10,500", "10,000", "9,500", "9,000", "8,500", "8,000", "", "7,000", "6,500", "6,000", "5,500"];

const Legend = ({ className, items }: { className: string; items: [string, string][] }) => (
  <p className={clsx("absolute flex items-center whitespace-nowrap", className)}>
    {items.map(([text, cls], i) =>
      text === "▯" ? (
        <span key={i} className={clsx("h-[12px] w-[8px] border-2 border-[#8a8a8a] bg-[#c9c9c9]", cls)} />
      ) : (
        <span key={i} className={cls}>{text}</span>
      )
    )}
  </p>
);

const PriceChart = () => (
  <div className="relative mr-[11px] ml-[13px]">
    <svg viewBox="13 962 3244 832" className="block h-auto w-full" fontSize="21">
      <defs>
        <linearGradient id="plot" x1="0" y1="0" x2="0" y2="1">
          <stop offset="0" stopColor="#fff" />
          <stop offset="0.3" stopColor="#fefefe" />
          <stop offset="0.55" stopColor="#ececec" />
          <stop offset="1" stopColor="#d2d2d2" />
        </linearGradient>
        <linearGradient id="axis" x1="0" y1="0" x2="0" y2="1">
          <stop offset="0" stopColor="#d3dfee" />
          <stop offset="1" stopColor="#b0bac8" />
        </linearGradient>
      </defs>
      <rect x="13" y="962" width="3130" height="798" fill="url(#plot)" />
      <rect x="3141" y="962" width="116" height="832" fill="url(#axis)" />
      <rect x="13" y="1760" width="3128" height="34" fill="#aeb6c2" />
      <g stroke="#c9c9c9" strokeWidth="2">
        {priceLabels.map((_, i) => (
          <path key={i} d={`M14 ${1020 + i * 46.25}H3139`} />
        ))}
        <path d="M14 1659H3139 M14 1708H3139 M1126 962V1794 M2497 962V1794" />
      </g>
      <path d="M13 962H3257V1794H13Z M3141 962V1794 M13 1600H3257 M13 1760H3257" fill="none" stroke="#868b93" strokeWidth="2" />

      <g fill="none" strokeWidth="2">
        <polyline stroke="#b552a5" points="307,1417 372,1404 438,1396 503,1385 569,1379 632,1377 698,1379 763,1383 829,1385 895,1396 960,1411 1026,1428 1090,1440 1157,1453 1225,1457 1290,1463 1354,1472 1420,1477 1500,1470 1565,1462 1630,1457 1800,1459 1900,1462 2005,1453 2136,1456 2200,1463 2326,1483 2432,1497 2538,1493 2665,1482 2740,1478 2770,1462 2822,1422 2856,1404 2922,1328 3020,1264" />
        <polyline stroke="#333c94" points="632,1388 829,1388 994,1404 1111,1412 1431,1452 1641,1462 1908,1463 2048,1453 2174,1460 2300,1470 2420,1483 2600,1477 2728,1481 2840,1451 2920,1411 3052,1357" />
        <polyline stroke="#d6a233" strokeWidth="4" points="698,1390 840,1391 960,1398 1080,1409 1417,1425 1676,1433 1880,1446 2174,1455 2330,1462 2600,1467 2740,1466 2824,1455 2922,1433 3052,1412" />
      </g>

      {candles.map(([up, top, bottom, high, low], i) => (
        <g key={i} fill={up ? "#d83d22" : "#2260c0"}>
          <rect x={candleX(i) - 1} y={high} width="2" height={low - high} />
          <rect x={candleX(i) - 30} y={top} width="61" height={bottom - top} />
        </g>
      ))}
      {volumes.map(([up, height], i) => (
        <rect key={i} x={candleX(i) - 30} y={1758 - height} width="61" height={height} fill={up ? "#c0391f" : "#1f54ad"} />
      ))}
      <path d="M13 1759H3139" stroke="#c98078" strokeWidth="2" />
      <g fill="none" strokeWidth="2">
        <polyline stroke="#b552a5" points="46,1747 209,1747 255,1749 300,1743 460,1743 580,1742 620,1747 730,1748 810,1754 1100,1755 2730,1754 2762,1744 2830,1727 2885,1708 2921,1692 3052,1683" />
        <polyline stroke="#cfa040" points="700,1732 750,1740 820,1746 1060,1748 1260,1750 1580,1752 2730,1754 2825,1747 2921,1740 2960,1737 3052,1737" />
      </g>

      <g stroke="#ea8434" strokeWidth="7">
        <path d="M14 1111H3139 M14 1204H3139 M14 1308H3139" />
      </g>
      <path d="M14 1393H3139 M1772 962V1760" stroke="#b5473c" strokeWidth="2" fill="none" />

      <g fill="#e0822e">
        <text x="17" y="1102">10,515</text>
        <text x="17" y="1195">9,525</text>
        <text x="17" y="1299">8,381</text>
      </g>
      <text x="2670" y="1069" fontSize="20" fill="#d2402a">최고 11,100 (11/11)</text>
      <path d="M2866 1063h13v-8l12 8-12 8v-8" fill="#d2402a" stroke="#d2402a" strokeWidth="2" />
      <text x="2224" y="1504" fontSize="20" fill="#2536c0">최저 6,300 (10/31)</text>
      <path d="M2410 1497h10v-8l12 8-12 8v-8" fill="#2536c0" stroke="#2536c0" strokeWidth="2" />
      <path d="M2792 1497l25 25h-12v37h-26v-37h-12z" fill="#d4331f" />

      {/* price axis */}
      <path
        d={Array.from({ length: 60 }, (_, i) => `M3141 ${1011 + i * 9.25}h5`).join(" ")}
        stroke="#7c8490"
        strokeWidth="2"
      />
      <g fill="#4c5158">
        {priceLabels.map((label, i) => (
          <g key={i}>
            <path d={`M3141 ${1020 + i * 46.25}h12`} stroke="#7c8490" strokeWidth="2" />
            <text x="3157" y={1027 + i * 46.25}>{label}</text>
          </g>
        ))}
        <text x="3157" y="1664">5,000K</text>
        <text x="3157" y="1712">2,500K</text>
        <text x="3158" y="1781">11/13</text>
        <text x="17" y="1782">2019/09</text>
        <text x="1130" y="1782">10</text>
        <text x="2501" y="1782">11</text>
      </g>
      <text x="3143" y="983" fill="#cc3a30">LC:41.11</text>
      <text x="3143" y="1004" fill="#2a62c8">HC:-19.91</text>
      <rect x="3150" y="1249" width="102" height="22" fill="#2361c9" />
      <text x="3157" y="1267" fill="#fff">8,890</text>
      <text x="3157" y="1288" fill="#2a62c8">-5.12%</text>
      <rect x="3150" y="1379" width="103" height="27" fill="#f0cd74" stroke="#222" strokeWidth="2" />
      <text x="3178" y="1400" fill="#4c4530">7,478</text>
      <rect x="3150" y="1714" width="101" height="22" fill="#1f54b5" />
      <text x="3157" y="1732" fill="#dfe6f4">1,235K</text>
      <text x="3157" y="1754" fill="#2a5ab5">97.16%</text>
      <rect x="3237" y="1605" width="14" height="13" fill="#33373e" />
      <path d="M3241 1609l6 6 M3247 1609l-6 6" stroke="#ddd" strokeWidth="2" />
      <rect x="1695" y="1761" width="152" height="30" fill="#cdb566" stroke="#222" strokeWidth="2" />
      <text x="1698" y="1783" fill="#5a4c22">2019/10/16(수)</text>

      {/* pen drawings */}
      <g fill="none" stroke="#3f9bd6" strokeLinecap="round" strokeLinejoin="round" strokeWidth="9">
        <path d="M67 1124L88 1128L103 1142L106 1173L91 1190L74 1195L53 1188L40 1173L34 1153L39 1133L53 1125Z M63 1205L81 1196L98 1199" />
        <path d="M222 1243L228 1278L235 1286L246 1282L270 1253L295 1237L307 1223" />
        <path d="M62 1557L67 1583L77 1604L98 1577L123 1543" />
        <path strokeWidth="11" d="M152 1328L211 1364L264 1389L317 1400L381 1400L465 1381L550 1375L677 1364L772 1356L909 1356L1015 1364L1068 1368L1126 1370L1161 1383L1203 1397L1276 1413L1322 1418L1368 1426L1392 1431L1420 1439L1445 1451L1462 1455L1494 1467L1529 1476L1571 1485L1603 1490L1652 1501L1708 1510L1771 1512L1838 1514L1859 1516L1887 1516L1901 1512L1992 1506L2055 1502L2076 1498L2132 1484L2160 1480L2227 1459L2295 1447L2390 1438L2495 1436L2570 1437L2600 1448L2618 1456L2668 1460L2696 1469L2737 1475L2792 1489L2805 1496L2821 1497L2860 1511L2901 1516" />
        <path d="M2897 1497L2915 1503L2938 1514L2949 1530L2910 1542L2892 1542" />
        <path strokeWidth="10" d="M205 1702L207 1707L274 1706L372 1711L484 1719L519 1719L565 1727L617 1727L625 1724L730 1724L821 1721L1100 1721L1600 1716L1900 1724L2115 1723L2284 1717L2500 1708L2562 1705L2817 1705L2885 1717L2916 1717 M2900 1688L2924 1718L2906 1733" />
      </g>
      <g fill="none" stroke="#ea4a8c" strokeLinecap="round" strokeLinejoin="round" strokeWidth="9">
        <path strokeWidth="8" d="M119 1075L137 1074L145 1087L147 1130L137 1147L125 1155L114 1148L112 1130L112 1087Z M128 1083V1148" />
        <path d="M270 1078L302 1100L316 1113 M333 1085L309 1093L258 1123" />
        <path d="M3041 1026L3009 1046L2947 1099L2929 1124L2915 1132L2910 1122L2910 1094L2917 1069" />
        <path d="M2858 1209L2881 1202L2882 1177L2876 1147L2865 1126L2847 1113L2810 1117L2796 1133L2796 1163L2805 1181L2819 1191L2851 1194 M2826 1135H2847L2849 1154L2847 1172 M2819 1178L2867 1171" />
        <path d="M2835 1305L2876 1270L2901 1250 M2856 1242L2866 1275L2917 1312L2835 1305 M2858 1250L2874 1340L2892 1250" />
        <path d="M3052 1150L3057 1160L3068 1192L3080 1206L3084 1241L3076 1276L3063 1284L3054 1282L3068 1259L3063 1223L3050 1190L3034 1173" fill="#ea4a8c" />
        <path d="M2970 1376L2981 1356L2990 1342L3002 1301L3018 1259 M2978 1271L2993 1262L3019 1252L3034 1280" />
      </g>
      <path d="M2044 1447v26l7-6 4 11 6-3-5-10h9z" fill="#eee" stroke="#333" strokeWidth="2" />
    </svg>
    <Legend
      className="top-[3px] left-[6px]"
      items={[
        ["▯", ""],
        ["네오크레마", "ml-[5px] border border-[#bbb] bg-[#efefef] px-[4px] leading-[22px] text-[#333]"],
        ["▯", "ml-[5px]"],
        ["종가 단순 5", "ml-[12px] text-[#b34aa6]"],
        ["10", "ml-[15px] text-[#333c94]"],
        ["20", "ml-[13px] text-[#dba832]"],
        ["60", "ml-[14px] text-[#2f8a50]"],
        ["120", "ml-[16px] text-[#8a8a8a]"],
        ["▯", "ml-[8px]"],
        ["상한가", "ml-[11px] text-[#cf3b2a]"],
        ["▯", "ml-[8px]"],
        ["하한가", "ml-[11px] text-[#1f2fc4]"],
      ]}
    />
    <svg viewBox="0 0 25 24" className="absolute top-[35px] left-[9px] h-[24px] w-[25px]" fill="#ddd" stroke="#333" strokeWidth="2">
      <path d="M1 1h23v22H1z" />
      <path d="M6 5h13v14H6z M10 5v14 M15 5v14 M6 10h13 M6 14h13" stroke="#888" strokeWidth="1" />
    </svg>
    <Legend
      className="top-[641px] left-[6px]"
      items={[
        ["▯", ""],
        ["거래량", "ml-[12px] text-[#3f8a90]"],
        ["단순 5", "ml-[12px] text-[#a0489a]"],
        ["20", "ml-[14px] text-[#c79a38]"],
        ["60", "ml-[14px] text-[#2f7a48]"],
        ["120", "ml-[15px] text-[#7c7c7c]"],
      ]}
    />
    <p className="absolute top-[663px] left-[9px] text-[#333]">1,234,683주(97.16%)</p>
  </div>
);

const periods: [string[], string, string][] = [
  [["일", "주", "월", "년"], "w-[34px]", "bg-[#ededed]"],
  [["분", "초", "틱"], "w-[34px]", "bg-[#ededed]"],
  [["1", "3", "5", "10", "15", "30", "45", "60"], "w-[33px]", "bg-[#e6e6e6] text-[#858585]"],
];

const bottomTools = [
  "M2 3h14v18H2z M10 12h12v9H10z M16 12v9", "M2 2h14v12H2z M8 8h14v13H8z", "M1 4h20 M3 10l4 8 4-8 4 8 6-9",
  "M2 2h20 M11 2v18 M3 10h16 M13 12l6 8", "M1 4h20 M4 20h3l5-11 5 11", "M4 2v18 M8 20l5-12 6 12", "M2 20L16 2 M10 20l5-10 6 10",
  "M3 12L12 2l8 5v8l-8 5-9-2z M12 2v9 M3 12h9", "M6 2h16v12H6z M2 8h14v13H2z M4 17l4-4 5 4", "M10 2a8 8 0 1 0 .1 0z M15 17l5 5",
  "M4 12h14", "M3 12h16 M11 4v16", "M8 20h8l-2-12h-4z M5 21h14",
];

const ChartWindow = () => (
  <section className="mr-[16px] flex flex-col bg-[#d8d8d8]">
    <TitleBar
      className="h-[44px] bg-[#47629b] pr-[10px] pl-[9px] text-[#eef2fa]"
      tone="text-[#b3c2e2]"
      title="[0600] 키움종합차트 - KOSDAQ 외국인보유[2(천)] 주식수[7,256(천)] 액면[500] 자본금[36(억)] 결산[12월] EPS[821] PER[10.91] 시가총액[650(억)] 유통비율[43.2]"
      icons={["dock", "copy", "pin", "T", "?", "|", "min", "max", "close"]}
    />
    <div className="mt-[10px] flex h-[34px] items-center gap-[3px] pl-[13px]">
      <Cell label="패널 접기" className="w-[34px] bg-[#eee]">
        <svg viewBox="0 0 24 24" className="size-[24px]" fill="none" stroke="#444" strokeWidth="2">
          <path d="M8 3h14v19H8 M8 3v19 M8 6h14" />
          <path d="M1 8l6 5-6 5z" fill="#444" stroke="none" />
        </svg>
      </Cell>
      <Combo label="종류" value="주" className="w-[55px]" />
      <Cell className="w-[34px] bg-[#f0f0f0]">전</Cell>
      <span className="flex h-full w-[152px] items-center border border-[#909090] bg-white">
        <input aria-label="종목코드" defaultValue="311390" className="ml-[2px] h-[28px] w-[68px] bg-[#2f7fd0] text-white outline-none" />
        <span className="ml-auto flex h-full w-[25px] items-center justify-center border-l border-[#909090] bg-[#eee]"><Arrow className="h-[9px] w-[12px] text-[#666]" /></span>
        <span className="flex h-full w-[33px] items-center justify-center border-l border-[#909090] bg-[#eee]"><Search className="size-[22px] text-[#777]" /></span>
      </span>
      <span className="flex h-full">
        <Cell label="소리" className="w-[31px] bg-[#eee]">
          <svg viewBox="0 0 24 20" className="h-[20px] w-[22px]" fill="#555"><path d="M2 6h4l6-6v20l-6-6H2z M16 5h2v3h-2z M16 11h2v3h-2z M20 5h2v3h-2z M20 11h2v3h-2z" /></svg>
        </Cell>
        <Cell label="소리 선택" className="w-[17px] border-l-0 bg-[#eee]"><Arrow className="h-[7px] w-[10px] text-[#555]" /></Cell>
      </span>
      <span className="flex h-full w-[142px] items-center overflow-hidden border border-[#909090] bg-[#f7f7f7] p-[2px]">
        <span className="flex h-full w-[28px] shrink-0 items-center justify-center bg-[#1d6668] text-white">신</span>
        <span className="ml-[4px] whitespace-nowrap text-[#7a2050]">네오크레마</span>
      </span>
      {periods.map(([names, width, tone]) => (
        <span key={names[0]} className="flex h-full">
          {names.map((n, i) => (
            <Cell key={n} className={clsx(width, i > 0 && "border-l-0", n === "일" ? "bg-[#4c7fc4] text-white" : tone)}>{n}</Cell>
          ))}
        </span>
      ))}
      <Combo label="분 간격" value="3" className="w-[67px] bg-[#e6e6e6] text-[#858585]" />
      <input aria-label="조회 개수" defaultValue="47" className="h-full w-[51px] border border-[#909090] bg-white pr-[4px] text-right outline-none" />
      <span className="w-[57px] text-[#555]">/77</span>
      <span className="flex h-full">
        <Cell label="캔들 추가" className="w-[34px] bg-[#e2e2e2]">
          <svg viewBox="0 0 24 24" className="size-[24px]" fill="#aaa"><path d="M2 5h5v8H2z M4 2h1v14H4z M10 5h5v8h-5z M12 2h1v14h-1z M14 18l5-4v3h4v3h-4v3z" /></svg>
        </Cell>
        <Cell label="지표 추가" className="w-[34px] border-l-0 bg-[#eee]">
          <svg viewBox="0 0 24 24" className="size-[24px]" fill="none" stroke="#555" strokeWidth="2"><path d="M1 10l6-6 6 8 9-9 M1 3l6 7 6-7 6 6 M18 14v9 M13 18h10" /></svg>
        </Cell>
        <Cell label="저장" className="w-[34px] border-l-0 bg-[#eee]"><Save className="size-[26px] text-[#555]" /></Cell>
        <Cell label="설정" className="w-[34px] border-l-0 bg-[#eee]"><Settings className="size-[22px] text-[#555]" strokeWidth={3} /></Cell>
      </span>
      <span className="flex h-full w-[147px] items-center border border-[#909090] bg-white">
        <input aria-label="날짜" defaultValue="2019/12/12" className="w-[112px] bg-transparent pl-[3px] outline-none" />
        <span className="flex h-full flex-1 items-center justify-center border-l border-[#909090] bg-[#eee]"><Calendar className="size-[22px] text-[#555]" /></span>
      </span>
    </div>
    <div className="mt-[6px] mb-[5px] flex h-[35px] gap-[4px] pl-[13px]">
      <div className="flex w-[1312px] items-center border border-[#a8a8a8] bg-[#efefef]">
        <span className="w-[105px] text-right text-[#2f57b5]">9,020</span>
        <Arrow className="ml-[5px] h-[15px] w-[18px] text-[#1f4fc0]" />
        <span className="w-[85px] text-right text-[#2f57b5]">80</span>
        <span className="flex h-full w-[88px] items-center justify-end border-r border-[#ccc] pr-[3px] text-[#2f57b5]">-0.88%</span>
        <span className="w-[122px] text-right">212,306</span>
        <span className="w-[102px] text-right text-[#2f57b5]">29.67%</span>
        <span className="flex h-full w-[75px] items-center justify-end border-r border-[#ccc] pr-[3px]">2.93%</span>
        <span className="flex h-full w-[143px] items-center justify-end border-r border-[#ccc] pr-[3px]">1,918백만</span>
        <span className="ml-[5px]">최우선</span>
        <span className="w-[75px] text-right text-[#2f57b5]">9,030</span>
        <span className="flex h-full w-[103px] items-center justify-end border-r border-[#ccc] pr-[15px] text-[#2f57b5]">8,980</span>
        <span className="ml-[3px]">시</span>
        <span className="w-[70px] text-right text-[#cf4430]">9,110</span>
        <span className="ml-[16px]">고</span>
        <span className="w-[69px] text-right text-[#cf4430]">9,210</span>
        <span className="ml-[16px]">저</span>
        <span className="w-[69px] text-right text-[#2f57b5]">8,840</span>
      </div>
      <Cell className="w-[69px] bg-[#f1d6d1]">매수</Cell>
      <Cell className="w-[69px] bg-[#cfdff0]">매도</Cell>
    </div>
    <PriceChart />
    <div className="mr-[11px] ml-[13px] flex h-[21px] items-center overflow-hidden bg-[#c9c9c9] text-[#222]">
      <span className="flex h-full w-[27px] items-center justify-center border-r border-[#888] bg-[#d6d6d6]"><Arrow dir="left" className="h-[13px] w-[10px] text-black" /></span>
      <span className="h-full w-[305px] bg-[#cfcfcf]" />
      <span className="h-full w-[1564px] border-r-2 border-[#666] bg-[#bdbdbd]" />
      <span className="ml-auto flex h-full">
        {["M8 2v14l8-7z", "M10 2v14l-8-7z M19 2v14l-8-7z", "M5 2h10v14H5z", "M2 2v14l8-7z M11 2v14l8-7z"].map((d) => (
          <button key={d} aria-label="재생 제어" className="w-[29px] border-r-2 border-[#777] bg-[#d0d0d0]">
            <svg viewBox="0 0 20 18" className="mx-auto h-[15px] w-[18px]" fill="#000"><path d={d} /></svg>
          </button>
        ))}
      </span>
      <input type="range" aria-label="재생 속도" defaultValue="62" className="mx-[10px] h-[4px] w-[120px] appearance-none bg-[#6a6a6a] [&::-webkit-slider-thumb]:h-[18px] [&::-webkit-slider-thumb]:w-[4px] [&::-webkit-slider-thumb]:appearance-none [&::-webkit-slider-thumb]:bg-[#555]" />
      <span className="flex gap-[7px] pr-[7px]">
        {bottomTools.map((d) => (
          <svg key={d} viewBox="0 0 23 23" className="size-[23px]" fill="none" stroke="#555" strokeWidth="2"><path d={d} /></svg>
        ))}
      </span>
    </div>
  </section>
);

/* ---------- right-hand tool strips ---------- */

const drawTools = [
  "M4 12l8-6v4h10v14H12 M22 18H12", "M2 4h10v28H2z M2 14h10 M2 23h10 M16 10h10 M18 26h8", "M22 6a12 12 0 1 0 .1 0z M22 14a5 5 0 1 0 .1 0z",
  "M2 18l7-8 7 6 8-9 M16 20v12", "M2 4v28h24 M6 18l7-8 7 9", "M12 6v22l6-6 5 8z", "M2 10h26 M4 26l8-8 6 8", "M2 28L28 10", "M2 20L28 6",
  "M2 28l6-10 6 6 10-18", "M6 8v20 M3 12h6v12H3z M20 6v24 M16 10h8v14h-8z", "M4 12l6 10 6-10 M10 22V8h16", "M4 6h14 M11 6v16 M6 30l8-8 8 6",
  "M4 28V10h14v10h8", "M2 28l8-6 6 4 8-12 M14 12l6-6 8 8", "M2 14l10-8 14 6 M2 28h20", "M2 6h26v24H2z M2 14h26 M2 22h26 M12 6v24", "M2 8h26 M2 18h26 M2 28h26",
];

const ToolStrip = () => (
  <aside className="flex w-[32px] shrink-0 flex-col overflow-hidden bg-[#e6e6e6]">
    <div className="mt-[16px] flex h-[932px] w-[41px] shrink-0 flex-col justify-between pl-[8px]">
      {drawTools.map((d, i) => (
        <button key={i} aria-label={`그리기 도구 ${i + 1}`} className="h-[41px] w-[41px] border-2 border-[#a5a5a5] bg-[#f3f3f3]">
          <svg
            viewBox="0 0 36 36"
            className="size-[37px]"
            fill={i === 5 ? "#2b3a78" : "none"}
            stroke={i === 2 ? "#c9962e" : i === 3 || i === 4 ? "#b8453c" : "#2b3a78"}
            strokeWidth={i > 13 ? 2 : 3}
          >
            <path d={d} />
          </svg>
        </button>
      ))}
    </div>
    <div className="mt-[8px] flex h-[84px] shrink-0 items-center border-t-2 border-[#aaa] bg-white">
      <svg viewBox="0 0 32 60" className="h-[60px] w-[32px]">
        <circle cx="30" cy="30" r="29" fill="#0b0b0b" />
        <path d="M30 4l-14 20 6 26h8z" fill="#fff" />
        <circle cx="30" cy="28" r="6" fill="#0b0b0b" />
        <path d="M29 30v22" stroke="#0b0b0b" strokeWidth="3" />
      </svg>
    </div>
    <div className="flex h-[52px] shrink-0 items-center border-t-2 border-l-2 border-black bg-[#3b96d2] pl-[5px]"><Eye className="size-[36px] shrink-0 fill-white text-black" strokeWidth={3} /></div>
    <div className="flex h-[52px] shrink-0 items-center border-l-2 border-black bg-[#f2c53d] pl-[4px]">
      <svg viewBox="0 0 30 40" className="h-[38px] w-[28px]" fill="#fff" stroke="#222" strokeWidth="2"><path d="M2 2l32 18-14 4 8 14-8 3-8-14-4 8z" /></svg>
    </div>
    <div className="flex h-[264px] shrink-0 flex-col items-start justify-between border-l-2 border-black bg-[#efefef] py-[8px] pl-[4px] text-black">
      <Pencil className="size-[38px] -scale-x-100" strokeWidth={2} />
      <Eraser className="size-[38px] -scale-x-100" strokeWidth={2} />
      <span className="ml-[14px] size-[12px] rounded-full bg-black" />
      <svg viewBox="0 0 30 46" className="h-[44px] w-[28px]" fill="none" stroke="#333" strokeWidth="3"><path d="M14 4L4 12l10 8v-5h12 M26 9H14V4 M12 30h12 M14 38h10" /></svg>
      <Trash2 className="size-[38px]" strokeWidth={2} />
    </div>
    <div className="flex h-[106px] shrink-0 flex-col justify-around border-l-2 border-black bg-[#3d3d3d] pl-[5px] text-white">
      <Camera className="size-[34px]" />
      <svg viewBox="0 0 26 38" className="h-[36px] w-[24px]"><path d="M2 0h26v38H2z" fill="#eee" /><path d="M6 8h20 M6 16h20 M6 24h20 M6 32h20" stroke="#333" strokeWidth="2" /></svg>
    </div>
    <div className="grid h-[28px] shrink-0 grid-cols-[28px_4px] border-t-2 border-black"><span className="bg-[#3c8ccc]" /><span className="bg-[#e8d034]" /></div>
    <div className="h-[82px] shrink-0 border-b-2 border-black bg-[#c43b7d]" />
    <div className="flex-1 bg-[#d6d6d6]" />
  </aside>
);

/* ---------- bottom bars ---------- */

const OrderBar = () => (
  <div className="flex h-[48px] shrink-0 items-center border-t-2 border-b-2 border-[#c4c4c4] bg-[#a9a9a9]">
    <span className="w-[18px] text-[14px] text-[#555]">×</span>
    <Badge />
    <div className="ml-[7px] flex h-[34px] gap-[4px] *:border-[#777] *:bg-[#cbcbcb]">
      <Combo label="계좌" value="5074-7852" className="w-[139px]" />
      <input aria-label="비밀번호" type="password" className="w-[96px] border outline-none" />
      <span className="flex h-full w-[136px] border">
        <input aria-label="주문 종목코드" defaultValue="311390" className="w-[80px] bg-transparent pl-[5px] outline-none" />
        <span className="flex w-[24px] items-center justify-center border-l border-[#888]"><Arrow className="h-[9px] w-[12px] text-[#555]" /></span>
        <span className="flex flex-1 items-center justify-center border-l border-[#888]"><Search className="size-[22px] text-[#666]" /></span>
      </span>
      <span className="flex w-[192px] items-center overflow-hidden border p-[2px]">
        <span className="flex h-full w-[30px] shrink-0 items-center justify-center bg-[#17565a] text-[#d8e2e2]">신</span>
        <span className="flex h-full w-[50px] shrink-0 items-center justify-center bg-[#b0b0b0]">40%</span>
        <span className="ml-[1px] whitespace-nowrap text-[#6d2048]">네오크레마</span>
      </span>
    </div>
    <div className="ml-[4px] flex h-full flex-1 *:flex *:items-center *:whitespace-pre">
      <p className="w-[521px] bg-[#bda49d] pl-[6px]">보통  현재가   현100%</p>
      <p className="w-[524px] bg-[#9ba9b8] pl-[9px]">보통  현재가   100%</p>
      <p className="w-[524px] bg-[#a8ac97] pl-[56px]">현재가   잔량전부</p>
      <p className="w-[522px] bg-[#b3a792] pl-[127px]">잔량전부</p>
    </div>
    <span className="mr-[30px] text-[#555]"><TitleIcon name="pin" /></span>
  </div>
);

const TabBar = () => (
  <div className="flex h-[50px] shrink-0 items-center border-b-2 border-[#b8b8b8] bg-[#a4a4a4] text-[#2a2a2a]">
    <span className="w-[13px] text-[14px] text-[#555]">×</span>
    {["주식호가", "키움종합차트", "순위분석(T)", "관심종목", "재무추이"].map((name) => (
      <button key={name} className={clsx("flex h-full w-[190px] items-center gap-[12px] border-r border-[#b5b5b5] pt-[4px] pl-[7px]", name === "키움종합차트" && "bg-[#8d8d8d]")}>
        <Badge className="border-[#7588b4]" />
        {name}
      </button>
    ))}
  </div>
);

const flows: [string, string, string, string][] = [
  ["거", "bg-[#b83c2a]", "3,300", "text-[#2c4c9c]"],
  ["코", "bg-[#c47a2c]", "292", "text-[#2c4c9c]"],
  ["선", "bg-[#3a8f78]", "436", "text-[#a83a3a]"],
  ["콜", "bg-[#5672ac]", "13", "text-[#a83a3a]"],
  ["풋", "bg-[#b8407c]", "0", "text-[#222]"],
];

const Ticker = () => (
  <div className="flex h-[19px] shrink-0 items-start overflow-hidden bg-[#8f99ae] text-[#262c3a]">
    <div className="flex h-[40px] w-full shrink-0 items-center whitespace-pre">
      <span className="ml-[18px] flex h-full w-[128px] items-center bg-[#8390ad] pl-[8px]">KOSPI200</span>
      <span className="ml-[20px] w-[262px] text-[#a83a44]">284.30  ▲ 4.02  1.43%</span>
      <span className="w-[220px]">27,881</span>
      <span>-</span>
      <span className="ml-[18px] flex h-full w-[132px] items-center bg-[#8390ad] pl-[12px]">KOSPI 종합</span>
      <span className="ml-[20px] w-[284px] text-[#a83a44]">2,131.83 ▲26.20  1.24%</span>
      <span className="w-[226px] border-r border-[#a5adbf]">240,600</span>
      <span className="ml-[24px]">“특고물 기리 약초차이며 예방, 치료효과 세계 첫 확인”</span>
      <span className="ml-auto">11:09:56  헤럴드경제   -</span>
      <span className="ml-[26px] flex h-full w-[86px] items-center bg-[#8390ad] pl-[20px]">개인</span>
      {flows.map(([tag, bg, value, tone]) => (
        <span key={tag} className="flex w-[88px] items-center justify-between pr-[4px]">
          <span className={clsx("px-px text-[#e2e2e2]", bg)}>{tag}</span>
          <span className={tone}>{value}</span>
        </span>
      ))}
      <span className="w-[144px] border-l border-[#a5adbf] pl-[46px]">신청대기</span>
    </div>
  </div>
);

export default function App() {
  return (
    <div className="relative flex h-screen flex-col overflow-hidden bg-[#4a4e57] font-['Noto_Sans_Mono_CJK_KR','Liberation_Mono','Noto_Sans_CJK_KR',monospace] text-[21px] leading-[26px] text-[#161616]">
      <VideoBar />
      <MainToolbar />
      <main className="flex min-h-0 flex-1">
        <div className="flex min-w-0 flex-1 flex-col">
          <div className="grid h-[702px] grid-cols-[1082fr_1250fr_932fr] items-start gap-[6px] pr-[8px]">
            <WatchWindow />
            <RankWindow />
            <QuoteWindow />
          </div>
          <ChartWindow />
        </div>
        <ToolStrip />
      </main>
      <OrderBar />
      <TabBar />
      <Ticker />
      <div className="absolute right-[17px] bottom-[4px] flex size-[78px] flex-col items-center justify-center rounded-full bg-[#5b94c6] text-[27px] font-black leading-[29px] text-[#e8eef4]">
        <span>구독</span>
        <span>클릭</span>
      </div>
    </div>
  );
}
